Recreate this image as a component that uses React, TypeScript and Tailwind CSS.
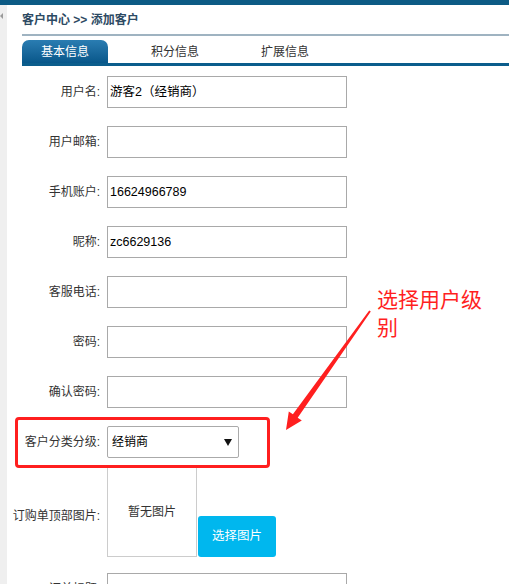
import React from "react";

const FONT = "font-['Liberation_Sans','Noto_Sans_CJK_SC',sans-serif]";

function Row({ label, value, mt = "mt-[18px]" }: { label: string; value?: string; mt?: string }) {
  return (
    <div className={`flex items-center ${mt}`}>
      <div className="w-[94px] text-right text-[12px] text-[#333] pr-[1px]">{label}:</div>
      <div className="ml-[6px] w-[240px] h-[32px] border border-[#a9a9a9] flex items-center pl-[2px] text-[12.5px] text-black">
        {value}
      </div>
    </div>
  );
}

export default function App() {
  return (
    <div className={`relative w-[509px] h-[584px] overflow-hidden bg-white ${FONT}`}>
      <div className="h-[5px] bg-[#0d5b85]" />
      <div className="flex h-[579px]">
        <div className="w-[7px] bg-[#efefef] relative">
          <svg className="absolute left-[0px] top-[8px]" width="4" height="6" viewBox="0 0 4 6">
            <polygon points="3,0 0,3 3,6" fill="#9a9a9a" />
          </svg>
        </div>
        <div className="flex-1">
          <div className="h-[29px] pl-[15px] flex items-center text-[12px] font-bold text-[#2d4a63]">
            客户中心 &gt;&gt; 添加客户
          </div>
          <div className="ml-[15px] h-[2px] bg-[#9fb3c1]" />
          <div className="ml-[15px] mt-[4px] flex h-[23px]">
            <div className="w-[86px] rounded-t-[7px] bg-gradient-to-b from-[#2a7db2] to-[#07578a] text-white text-[12px] flex items-center justify-center">
              基本信息
            </div>
            <div className="w-[86px] ml-[24px] text-[#333] text-[12px] flex items-center justify-center">积分信息</div>
            <div className="w-[86px] ml-[24px] text-[#333] text-[12px] flex items-center justify-center">扩展信息</div>
          </div>
          <div className="ml-[15px] h-[3px] bg-[#0b5d8c]" />

          <Row label="用户名" value="游客2（经销商）" mt="mt-[10px]" />
          <Row label="用户邮箱" />
          <Row label="手机账户" value="16624966789" />
          <Row label="昵称" value="zc6629136" />
          <Row label="客服电话" />
          <Row label="密码" />
          <Row label="确认密码" />

          <div className="relative flex items-center mt-[18px]">
            <div className="w-[94px] text-right text-[12px] text-[#333] pr-[1px]">客户分类分级:</div>
            <div className="ml-[6px] w-[132px] h-[32px] border border-[#aaa] rounded-[2px] flex items-center justify-between pl-[4px] pr-[6px] text-[12px] text-black">
              <span>经销商</span>
              <svg width="8" height="7" viewBox="0 0 8 7">
                <polygon points="0,0 8,0 4,7" fill="#111" />
              </svg>
            </div>
            <div className="absolute left-[8px] top-[-9px] w-[255px] h-[51px] border-[3px] border-[#ff1f1f] rounded-[4px]" />
          </div>

          <div className="flex mt-[9px]">
            <div className="w-[94px] text-right text-[12px] text-[#333] pr-[1px] self-center mt-[8px]">订购单顶部图片:</div>
            <div className="ml-[6px] w-[90px] h-[90px] border border-[#ccc] flex items-center justify-center text-[12px] text-[#333]">
              <span className="-mt-[1px]">暂无图片</span>
            </div>
            <div className="self-end ml-[1px] w-[78px] h-[41px] bg-[#00b7ee] rounded-[3px] text-white text-[12.5px] flex items-center justify-center">
              选择图片
            </div>
          </div>

          <Row label="订单标题" mt="mt-[16px]" />
        </div>
      </div>

      <svg className="absolute left-0 top-0 pointer-events-none" width="509" height="584" viewBox="0 0 509 584">
        <polygon
          points="286,430 288.8,411.4 292.9,414.3 369.2,310.4 370.8,311.6 297.7,417.7 301.8,420.6"
          fill="#ff1f1f"
        />
      </svg>
      <div className="absolute left-[377px] top-[284px] w-[118px] text-[21px] leading-[28px] text-[#ff1f1f] font-['Noto_Sans_CJK_SC',sans-serif]">
        选择用户级别
      </div>
    </div>
  );
}
